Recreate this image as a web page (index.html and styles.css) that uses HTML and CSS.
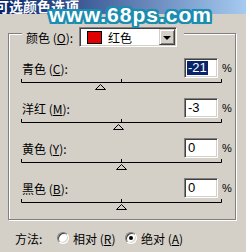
FILE: index.html
```html
<!DOCTYPE html>
<html lang="zh">
<head>
    <meta charset="UTF-8">
    <title>可选颜色选项</title>
    <link rel="stylesheet" href="styles.css">
</head>
<body>

    <div class="titlebar"><span>可选颜色选项</span></div>
    <div class="watermark">www.68ps.com</div>

    <!-- Colour group -->
    <div class="group">
        <div class="legend">
            <span class="legend-label">颜色 (<u>O</u>):</span>
            <div class="select">
                <span class="swatch"></span>
                <span class="select-text">红色</span>
                <span class="select-btn"><i></i></span>
            </div>
        </div>

        <div class="rows">
            <div class="row">
                <div class="row-top">
                    <span class="label">青色 (<u>C</u>):</span>
                    <div class="field"><span class="sel">-21</span></div>
                    <span class="pct">%</span>
                </div>
                <svg class="slider" width="202" height="12" viewBox="0 0 202 12">
                    <path d="M0.5 0V3.5H200.5V0M100.5 0V3.5" stroke="#000" fill="none"/>
                    <path d="M74.5 10.5L79.5 5.5L84.5 10.5Z" stroke="#000" fill="#d4d0c8"/>
                </svg>
            </div>
            <div class="row">
                <div class="row-top">
                    <span class="label">洋红 (<u>M</u>):</span>
                    <div class="field"><span>-3</span></div>
                    <span class="pct">%</span>
                </div>
                <svg class="slider" width="202" height="12" viewBox="0 0 202 12">
                    <path d="M0.5 0V3.5H200.5V0M100.5 0V3.5" stroke="#000" fill="none"/>
                    <path d="M92.5 10.5L97.5 5.5L102.5 10.5Z" stroke="#000" fill="#d4d0c8"/>
                </svg>
            </div>
            <div class="row">
                <div class="row-top">
                    <span class="label">黄色 (<u>Y</u>):</span>
                    <div class="field"><span>0</span></div>
                    <span class="pct">%</span>
                </div>
                <svg class="slider" width="202" height="12" viewBox="0 0 202 12">
                    <path d="M0.5 0V3.5H200.5V0M100.5 0V3.5" stroke="#000" fill="none"/>
                    <path d="M95.5 10.5L100.5 5.5L105.5 10.5Z" stroke="#000" fill="#d4d0c8"/>
                </svg>
            </div>
            <div class="row">
                <div class="row-top">
                    <span class="label">黑色 (<u>B</u>):</span>
                    <div class="field"><span>0</span></div>
                    <span class="pct">%</span>
                </div>
                <svg class="slider" width="202" height="12" viewBox="0 0 202 12">
                    <path d="M0.5 0V3.5H200.5V0M100.5 0V3.5" stroke="#000" fill="none"/>
                    <path d="M95.5 10.5L100.5 5.5L105.5 10.5Z" stroke="#000" fill="#d4d0c8"/>
                </svg>
            </div>
        </div>
    </div>

    <!-- Method -->
    <div class="method">
        <span class="method-label">方法:</span>
        <span class="radio"></span>
        <span class="opt opt-rel">相对 (<u>R</u>)</span>
        <span class="radio checked"></span>
        <span class="opt">绝对 (<u>A</u>)</span>
    </div>

</body>
</html>
```

FILE: styles.css
```css
body {
    margin: 0;
    width: 246px;
    height: 252px;
    position: relative;
    overflow: hidden;
    background: #d4d0c8;
    font-family: "Noto Sans CJK SC", sans-serif;
    font-size: 12px;
    color: #000;
}
u {
    text-decoration: underline;
}
.titlebar {
    height: 14px;
    background: linear-gradient(to right, #0a246a, #a6caf0);
    color: #fff;
    font-weight: bold;
    font-size: 14px;
    line-height: 12px;
    white-space: nowrap;
    overflow: hidden;
}
.titlebar span {
    display: block;
    margin-left: -5px;
}
.watermark {
    position: absolute;
    left: 49px;
    top: 3px;
    font: bold 21px/24px "Liberation Sans", sans-serif;
    letter-spacing: 1px;
    color: #fff;
    text-shadow:
        2px 0 0 #1b8db0, -2px 0 0 #1b8db0, 0 2px 0 #1b8db0, 0 -2px 0 #1b8db0,
        2px 2px 0 #1b8db0, -2px -2px 0 #1b8db0, 2px -2px 0 #1b8db0, -2px 2px 0 #1b8db0,
        0 0 3px #1b8db0;
}
.group {
    box-sizing: border-box;
    width: 228px;
    margin: 19px 0 0 8px;
    padding-bottom: 1px;
    border: 1px solid #808080;
    box-shadow: inset 1px 1px 0 #fff, 1px 1px 0 #fff;
}
.legend {
    display: flex;
    align-items: center;
    width: fit-content;
    height: 20px;
    margin: -7px 0 0 13px;
    padding: 0 7px 0 4px;
    background: #d4d0c8;
}
.legend-label {
    width: 53px;
}
.select {
    box-sizing: border-box;
    display: flex;
    align-items: center;
    width: 98px;
    height: 20px;
    background: #fff;
    border: 1px solid;
    border-color: #808080 #fff #fff #808080;
    box-shadow: inset 1px 1px 0 #404040, inset -1px -1px 0 #d4d0c8;
    padding: 1px;
}
.swatch {
    box-sizing: border-box;
    width: 15px;
    height: 13px;
    margin-left: 6px;
    background: #e00000;
    border: 1px solid #000;
}
.select-text {
    flex: 1;
    margin-left: 6px;
}
.select-btn {
    box-sizing: border-box;
    display: flex;
    align-items: center;
    justify-content: center;
    width: 16px;
    height: 16px;
    background: #d4d0c8;
    border: 1px solid;
    border-color: #d4d0c8 #404040 #404040 #d4d0c8;
    box-shadow: inset 1px 1px 0 #fff, inset -1px -1px 0 #808080;
}
.select-btn i {
    width: 0;
    height: 0;
    border-left: 4px solid transparent;
    border-right: 4px solid transparent;
    border-top: 4px solid #000;
    margin-top: 1px;
}
.rows {
    margin-top: 11px;
}
.row {
    height: 40px;
    padding: 0 4px 0 12px;
}
.row-top {
    display: flex;
    align-items: center;
    height: 20px;
}
.label {
    flex: 1;
    margin-left: 1px;
}
.field {
    box-sizing: border-box;
    width: 34px;
    height: 20px;
    padding: 2px 2px;
    background: #fff;
    border: 1px solid;
    border-color: #808080 #fff #fff #808080;
    box-shadow: inset 1px 1px 0 #404040, inset -1px -1px 0 #d4d0c8;
    font: 13px/14px "Liberation Sans", sans-serif;
}
.field span {
    display: inline-block;
    padding: 0 1px;
}
.field .sel {
    background: #0a246a;
    color: #fff;
}
.pct {
    width: 9px;
    margin-left: 4px;
    font: 11px "Liberation Sans", sans-serif;
}
.slider {
    display: block;
    margin-top: 1px;
}
.method {
    display: flex;
    align-items: center;
    height: 16px;
    margin: 10px 0 0 15px;
}
.method-label {
    width: 42px;
}
.radio {
    box-sizing: border-box;
    position: relative;
    width: 12px;
    height: 12px;
    border-radius: 50%;
    background: #fff;
    border: 1px solid;
    border-color: #808080 #fff #fff #808080;
    box-shadow: inset 1px 1px 0 #404040, inset -1px -1px 0 #d4d0c8;
}
.radio.checked::after {
    content: "";
    position: absolute;
    left: 3px;
    top: 3px;
    width: 4px;
    height: 4px;
    border-radius: 50%;
    background: #000;
}
.opt {
    margin-left: 4px;
}
.opt-rel {
    width: 52px;
}
```
